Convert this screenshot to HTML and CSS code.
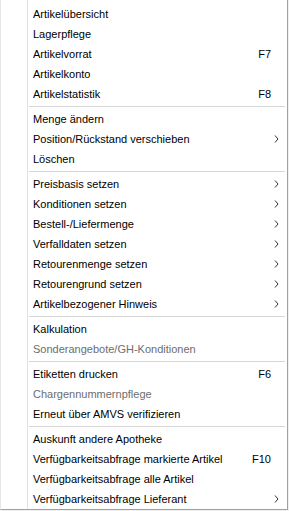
FILE: index.html
```html
<!DOCTYPE html>
<html lang="de">
<head>
<meta charset="utf-8">
<title>Kontextmenü</title>
<link rel="stylesheet" href="styles.css">
</head>
<body>
<div class="menu">
  <div class="item"><span class="label">Artikelübersicht</span></div>
  <div class="item"><span class="label">Lagerpflege</span></div>
  <div class="item"><span class="label">Artikelvorrat</span><span class="key">F7</span></div>
  <div class="item"><span class="label">Artikelkonto</span></div>
  <div class="item"><span class="label">Artikelstatistik</span><span class="key">F8</span></div>
  <div class="sep"></div>
  <div class="item"><span class="label">Menge ändern</span></div>
  <div class="item sub"><span class="label">Position/Rückstand verschieben</span><svg class="arrow" viewBox="0 0 5 8"><polyline points="1,0.5 4,4 1,7.5"/></svg></div>
  <div class="item"><span class="label">Löschen</span></div>
  <div class="sep"></div>
  <div class="item sub"><span class="label">Preisbasis setzen</span><svg class="arrow" viewBox="0 0 5 8"><polyline points="1,0.5 4,4 1,7.5"/></svg></div>
  <div class="item sub"><span class="label">Konditionen setzen</span><svg class="arrow" viewBox="0 0 5 8"><polyline points="1,0.5 4,4 1,7.5"/></svg></div>
  <div class="item sub"><span class="label">Bestell-/Liefermenge</span><svg class="arrow" viewBox="0 0 5 8"><polyline points="1,0.5 4,4 1,7.5"/></svg></div>
  <div class="item sub"><span class="label">Verfalldaten setzen</span><svg class="arrow" viewBox="0 0 5 8"><polyline points="1,0.5 4,4 1,7.5"/></svg></div>
  <div class="item sub"><span class="label">Retourenmenge setzen</span><svg class="arrow" viewBox="0 0 5 8"><polyline points="1,0.5 4,4 1,7.5"/></svg></div>
  <div class="item sub"><span class="label">Retourengrund setzen</span><svg class="arrow" viewBox="0 0 5 8"><polyline points="1,0.5 4,4 1,7.5"/></svg></div>
  <div class="item sub"><span class="label">Artikelbezogener Hinweis</span><svg class="arrow" viewBox="0 0 5 8"><polyline points="1,0.5 4,4 1,7.5"/></svg></div>
  <div class="sep"></div>
  <div class="item"><span class="label">Kalkulation</span></div>
  <div class="item disabled"><span class="label">Sonderangebote/GH-Konditionen</span></div>
  <div class="sep"></div>
  <div class="item"><span class="label">Etiketten drucken</span><span class="key">F6</span></div>
  <div class="item disabled"><span class="label">Chargennummernpflege</span></div>
  <div class="item"><span class="label">Erneut über AMVS verifizieren</span></div>
  <div class="sep"></div>
  <div class="item"><span class="label">Auskunft andere Apotheke</span></div>
  <div class="item"><span class="label">Verfügbarkeitsabfrage markierte Artikel</span><span class="key">F10</span></div>
  <div class="item"><span class="label">Verfügbarkeitsabfrage alle Artikel</span></div>
  <div class="item sub"><span class="label">Verfügbarkeitsabfrage Lieferant</span><svg class="arrow" viewBox="0 0 5 8"><polyline points="1,0.5 4,4 1,7.5"/></svg></div>
</div>
</body>
</html>
```
FILE: styles.css
```css
html, body {
  margin: 0;
  padding: 0;
  background: #f0f0f0;
}
body {
  width: 289px;
  height: 511px;
  overflow: hidden;
}
.menu {
  box-sizing: border-box;
  width: 288px;
  height: 510px;
  background: #ffffff;
  border-left: 1px solid #e6e6e6;
  border-right: 1px solid #a0a0a0;
  border-bottom: 1px solid #a0a0a0;
  padding: 4px 0 0 0;
  font-family: "Liberation Sans", Arial, sans-serif;
  font-size: 11px;
  color: #000;
  background-image: linear-gradient(#e2e2e2, #e2e2e2);
  background-size: 1px 100%;
  background-position: 26px 0;
  background-repeat: no-repeat;
}
.item {
  height: 20px;
  display: flex;
  align-items: center;
  padding-left: 32px;
  padding-right: 16px;
  white-space: nowrap;
}
.label {
  flex: 1;
}
.arrow {
  width: 5px;
  height: 8px;
  margin-right: -8px;
  fill: none;
  stroke: #333;
  stroke-width: 1;
}
.disabled {
  color: #6d6d6d;
}
.sep {
  height: 5px;
  display: flex;
  align-items: center;
  padding-left: 28px;
  padding-right: 2px;
}
.sep::before {
  content: "";
  flex: 1;
  height: 1px;
  background: #d7d7d7;
}
```
